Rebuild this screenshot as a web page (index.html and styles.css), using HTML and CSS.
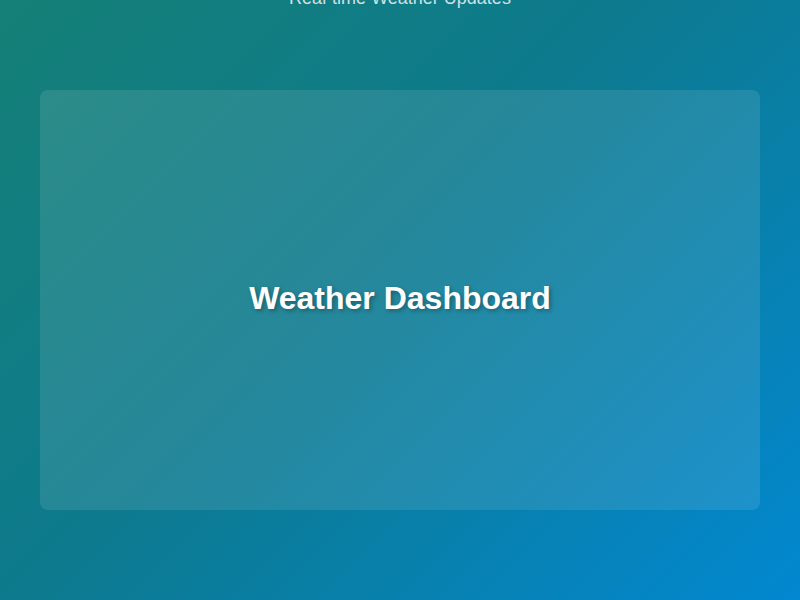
FILE: index.html
```html
<!DOCTYPE html>
<html>
<head>
<meta charset="utf-8">
<link rel="stylesheet" href="styles.css">
</head>
<body>
<div class="page">
  <p class="subtitle">Real-time Weather Updates</p>
  <main class="card">
    <h1 class="title">Weather Dashboard</h1>
  </main>
</div>
</body>
</html>
```
FILE: styles.css
```css
html, body {
  margin: 0;
  padding: 0;
  height: 100%;
}
body {
  background: linear-gradient(135deg, #158076 0%, #0d7a8e 45%, #0288d1 100%);
  font-family: "Liberation Sans", Arial, sans-serif;
  overflow: hidden;
}
.page {
  display: flex;
  flex-direction: column;
  align-items: center;
  padding: 0 40px;
}
.subtitle {
  margin: -13px 0 0;
  font-size: 18px;
  line-height: 22px;
  color: rgba(255, 255, 255, 0.8);
}
.card {
  box-sizing: border-box;
  width: 720px;
  height: 420px;
  margin-top: 81px;
  border-radius: 8px;
  background: rgba(255, 255, 255, 0.1);
  display: flex;
  align-items: center;
  justify-content: center;
}
.title {
  margin: 0 0 4px;
  font-size: 32px;
  font-weight: 700;
  color: #fff;
  text-shadow: 2px 2px 4px rgba(0, 0, 0, 0.3);
}
```
